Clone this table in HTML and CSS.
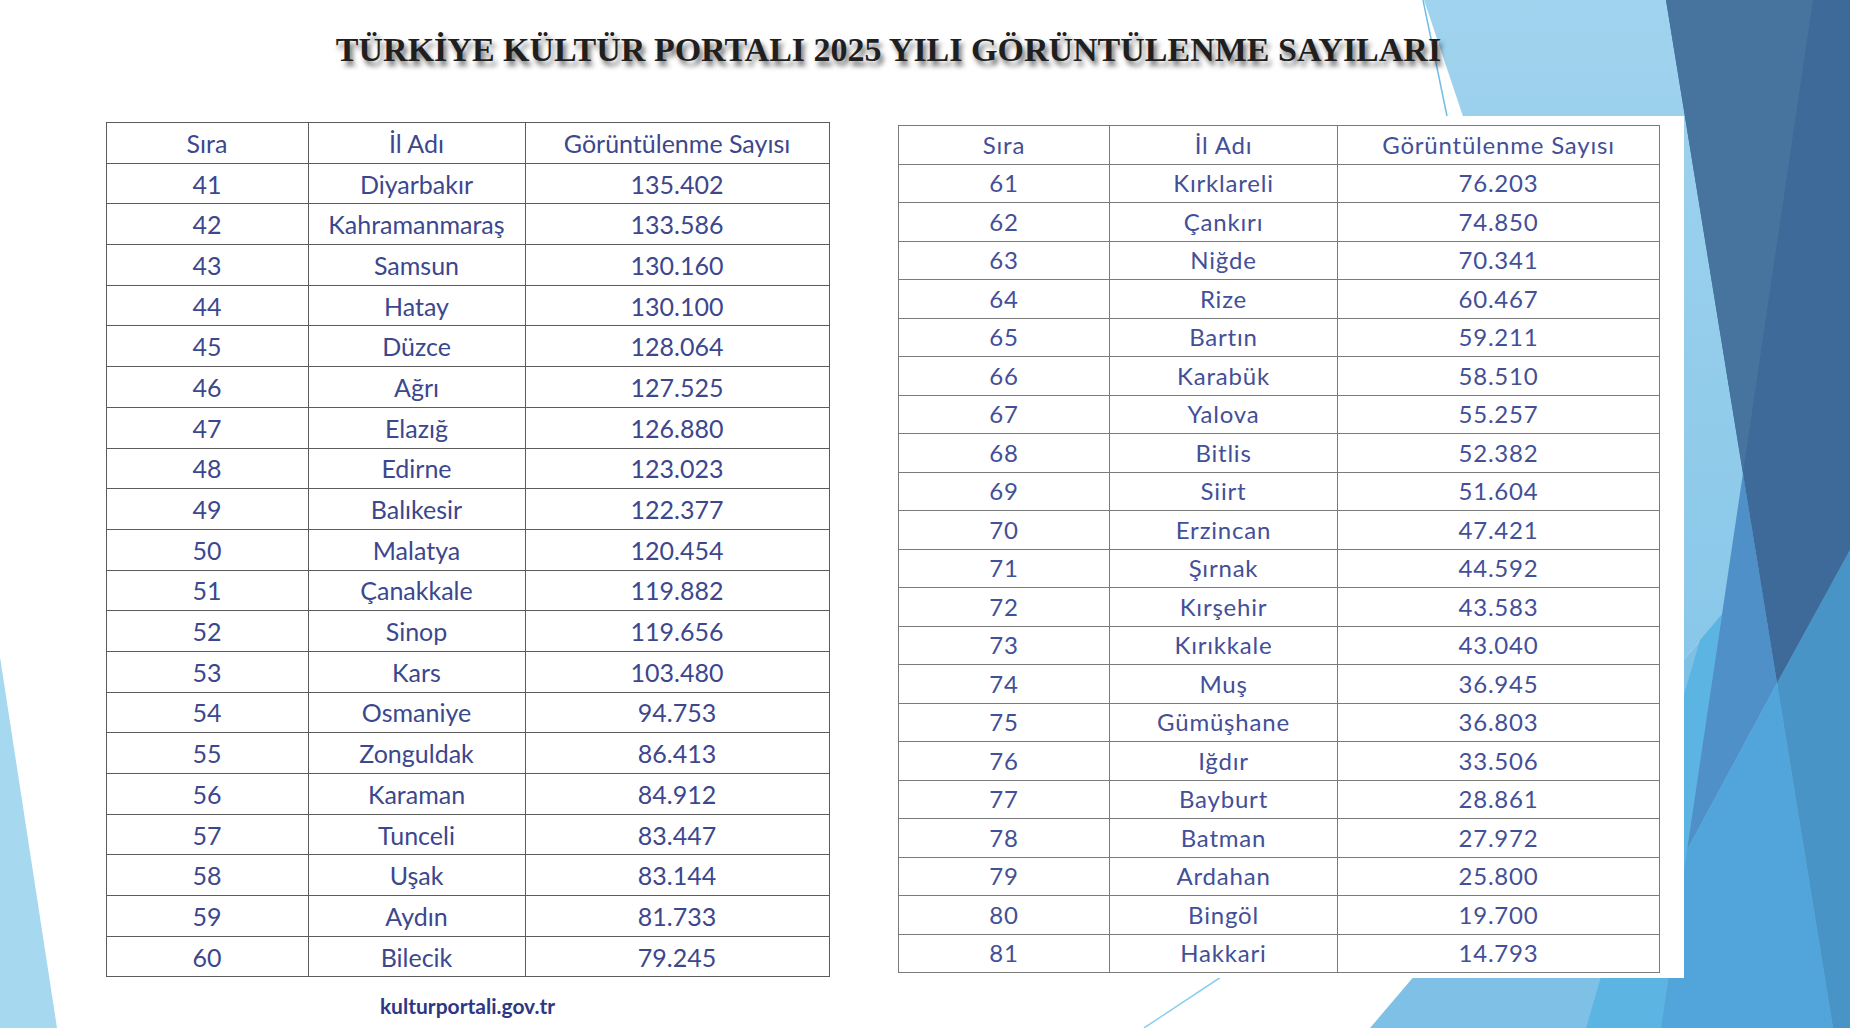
FILE: index.html
```html
<!DOCTYPE html>
<html lang="tr">
<head>
<meta charset="utf-8">
<title>Türkiye Kültür Portalı 2025 Yılı Görüntülenme Sayıları</title>
<link rel="stylesheet" href="styles.css">
</head>
<body>
<div class="slide">
  <svg class="deco" viewBox="0 0 1850 1028" width="1850" height="1028" aria-hidden="true">
    <defs>
      <linearGradient id="lightGrad" x1="0" y1="0" x2="0" y2="1">
        <stop offset="0" stop-color="#a0d3ee"/>
        <stop offset="1" stop-color="#88c7e9"/>
      </linearGradient>
    </defs>
    <polygon points="0,657 57,1028 0,1028" fill="#a6d8f0"/>
    <polygon points="1424,0 1850,0 1850,465 1656,692" fill="url(#lightGrad)"/>
    <polygon points="1656,692 1850,465 1850,1028 1370,1028" fill="#7fc1e6"/>
    <polygon points="1586,1028 1700,640 1722,614 1661,1028" fill="#5cb4e2"/>
    <polygon points="1743,473 1777,683 1687,850" fill="#4f90c8"/>
    <polygon points="1687,850 1777,683 1833,1028 1661,1028" fill="#52a5da"/>
    <polygon points="1777,683 1850,550 1850,1028 1833,1028" fill="#4994c6"/>
    <polygon points="1666,0 1850,0 1850,550 1777,683" fill="#3d6a99"/>
    <polygon points="1666,0 1813,0 1743,473" fill="#46749f"/>
    <line x1="1423" y1="0" x2="1447" y2="116" stroke="#6fbde8" stroke-width="1.5"/>
    <line x1="1221" y1="977" x2="1144" y2="1028" stroke="#8ccff0" stroke-width="1.5"/>
  </svg>

  <h1 class="title">TÜRKİYE KÜLTÜR PORTALI 2025 YILI GÖRÜNTÜLENME SAYILARI</h1>

  <div class="content">
    <div class="left-col">
      <table class="stats stats-left">
        <colgroup><col class="c1"><col class="c2"><col class="c3"></colgroup>
        <thead><tr><th>Sıra</th><th>İl Adı</th><th>Görüntülenme Sayısı</th></tr></thead>
        <tbody>
          <tr><td>41</td><td>Diyarbakır</td><td>135.402</td></tr>
          <tr><td>42</td><td>Kahramanmaraş</td><td>133.586</td></tr>
          <tr><td>43</td><td>Samsun</td><td>130.160</td></tr>
          <tr><td>44</td><td>Hatay</td><td>130.100</td></tr>
          <tr><td>45</td><td>Düzce</td><td>128.064</td></tr>
          <tr><td>46</td><td>Ağrı</td><td>127.525</td></tr>
          <tr><td>47</td><td>Elazığ</td><td>126.880</td></tr>
          <tr><td>48</td><td>Edirne</td><td>123.023</td></tr>
          <tr><td>49</td><td>Balıkesir</td><td>122.377</td></tr>
          <tr><td>50</td><td>Malatya</td><td>120.454</td></tr>
          <tr><td>51</td><td>Çanakkale</td><td>119.882</td></tr>
          <tr><td>52</td><td>Sinop</td><td>119.656</td></tr>
          <tr><td>53</td><td>Kars</td><td>103.480</td></tr>
          <tr><td>54</td><td>Osmaniye</td><td>94.753</td></tr>
          <tr><td>55</td><td>Zonguldak</td><td>86.413</td></tr>
          <tr><td>56</td><td>Karaman</td><td>84.912</td></tr>
          <tr><td>57</td><td>Tunceli</td><td>83.447</td></tr>
          <tr><td>58</td><td>Uşak</td><td>83.144</td></tr>
          <tr><td>59</td><td>Aydın</td><td>81.733</td></tr>
          <tr><td>60</td><td>Bilecik</td><td>79.245</td></tr>
        </tbody>
      </table>
      <div class="source">kulturportali.gov.tr</div>
    </div>

    <div class="right-panel">
      <table class="stats stats-right">
        <colgroup><col class="c1"><col class="c2"><col class="c3"></colgroup>
        <thead><tr><th>Sıra</th><th>İl Adı</th><th>Görüntülenme Sayısı</th></tr></thead>
        <tbody>
          <tr><td>61</td><td>Kırklareli</td><td>76.203</td></tr>
          <tr><td>62</td><td>Çankırı</td><td>74.850</td></tr>
          <tr><td>63</td><td>Niğde</td><td>70.341</td></tr>
          <tr><td>64</td><td>Rize</td><td>60.467</td></tr>
          <tr><td>65</td><td>Bartın</td><td>59.211</td></tr>
          <tr><td>66</td><td>Karabük</td><td>58.510</td></tr>
          <tr><td>67</td><td>Yalova</td><td>55.257</td></tr>
          <tr><td>68</td><td>Bitlis</td><td>52.382</td></tr>
          <tr><td>69</td><td>Siirt</td><td>51.604</td></tr>
          <tr><td>70</td><td>Erzincan</td><td>47.421</td></tr>
          <tr><td>71</td><td>Şırnak</td><td>44.592</td></tr>
          <tr><td>72</td><td>Kırşehir</td><td>43.583</td></tr>
          <tr><td>73</td><td>Kırıkkale</td><td>43.040</td></tr>
          <tr><td>74</td><td>Muş</td><td>36.945</td></tr>
          <tr><td>75</td><td>Gümüşhane</td><td>36.803</td></tr>
          <tr><td>76</td><td>Iğdır</td><td>33.506</td></tr>
          <tr><td>77</td><td>Bayburt</td><td>28.861</td></tr>
          <tr><td>78</td><td>Batman</td><td>27.972</td></tr>
          <tr><td>79</td><td>Ardahan</td><td>25.800</td></tr>
          <tr><td>80</td><td>Bingöl</td><td>19.700</td></tr>
          <tr><td>81</td><td>Hakkari</td><td>14.793</td></tr>
        </tbody>
      </table>
    </div>
  </div>
</div>
</body>
</html>
```

FILE: styles.css
```css
html, body {
  margin: 0;
  padding: 0;
  background: #ffffff;
}

.slide {
  position: relative;
  width: 1850px;
  height: 1028px;
  overflow: hidden;
  background: #ffffff;
  font-family: Lato, "Open Sans", "Liberation Sans", sans-serif;
}

.deco {
  position: absolute;
  left: 0;
  top: 0;
  z-index: 0;
  display: block;
}

.title {
  position: relative;
  z-index: 1;
  margin: 0;
  padding: 30px 73px 0 0;
  height: 88px;
  box-sizing: border-box;
  text-align: center;
  font-family: "Liberation Serif", "DejaVu Serif", serif;
  font-weight: bold;
  font-size: 34px;
  line-height: 40px;
  color: #1f1f1f;
  text-shadow: 3px 5px 5px rgba(0, 0, 0, 0.55);
  white-space: nowrap;
}

.content {
  position: relative;
  z-index: 1;
  display: flex;
  align-items: flex-start;
  padding-left: 106px;
  margin-top: 28px;
}

.left-col {
  display: flex;
  flex-direction: column;
  align-items: center;
  width: 723px;
  margin-top: 6px;
}

.right-panel {
  margin-left: 51px;
  background: #ffffff;
  padding: 9px 24px 5px 18px;
}

.stats {
  border-collapse: collapse;
  table-layout: fixed;
  color: #3c478d;
  background: #ffffff;
}

.stats th,
.stats td {
  padding: 0;
  text-align: center;
  vertical-align: middle;
  font-weight: normal;
  white-space: nowrap;
}

.stats-left {
  width: 723px;
  font-size: 25px;
}

.stats-left .c1 { width: 202px; }
.stats-left .c2 { width: 217px; }
.stats-left .c3 { width: 304px; }

.stats-left th,
.stats-left td {
  border: 1px solid #5c5c5c;
  height: 39.7px;
  line-height: 26px;
}

.stats-right {
  width: 761px;
  font-size: 24px;
  letter-spacing: 0.8px;
  color: #434f97;
}

.stats-right .c1 { width: 211px; }
.stats-right .c2 { width: 228px; }
.stats-right .c3 { width: 322px; }

.stats-right th,
.stats-right td {
  border: 1px solid #7a7a7a;
  height: 37.5px;
  line-height: 24px;
}

.source {
  margin-top: 17px;
  font-weight: bold;
  font-size: 21px;
  line-height: 24px;
  color: #2d3783;
}
```
